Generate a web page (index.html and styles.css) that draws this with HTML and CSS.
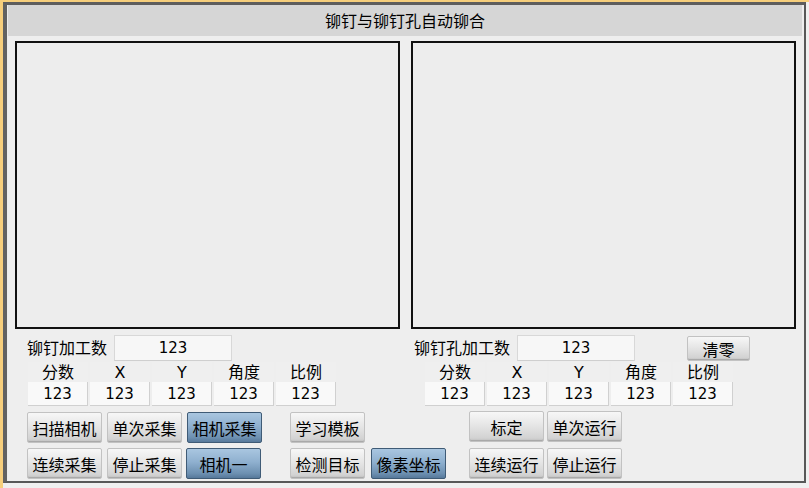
FILE: index.html
```html
<!DOCTYPE html>
<html>
<head>
    <meta charset="utf-8">
    <title>铆钉与铆钉孔自动铆合</title>
    <link rel="stylesheet" href="styles.css">
</head>
<body>
    <div class="frame">
        <div class="panel">
            <div class="title-bar">铆钉与铆钉孔自动铆合</div>

            <div class="views">
                <div class="view"></div>
                <div class="view"></div>
            </div>

            <div class="info">
                <div class="half left">
                    <div class="count-row">
                        <span class="count-label">铆钉加工数</span>
                        <div class="field num">123</div>
                    </div>
                    <div class="result-grid">
                        <div class="head">分数</div>
                        <div class="head">X</div>
                        <div class="head">Y</div>
                        <div class="head">角度</div>
                        <div class="head">比例</div>
                        <div class="val num">123</div>
                        <div class="val num">123</div>
                        <div class="val num">123</div>
                        <div class="val num">123</div>
                        <div class="val num">123</div>
                    </div>
                </div>
                <div class="half right">
                    <div class="count-row">
                        <span class="count-label wide">铆钉孔加工数</span>
                        <div class="field num">123</div>
                        <button class="btn clear">清零</button>
                    </div>
                    <div class="result-grid">
                        <div class="head">分数</div>
                        <div class="head">X</div>
                        <div class="head">Y</div>
                        <div class="head">角度</div>
                        <div class="head">比例</div>
                        <div class="val num">123</div>
                        <div class="val num">123</div>
                        <div class="val num">123</div>
                        <div class="val num">123</div>
                        <div class="val num">123</div>
                    </div>
                </div>
            </div>

            <div class="controls">
                <div class="btn-grid three">
                    <button class="btn">扫描相机</button>
                    <button class="btn">单次采集</button>
                    <button class="btn blue">相机采集</button>
                    <button class="btn">连续采集</button>
                    <button class="btn">停止采集</button>
                    <button class="btn blue shift">相机一</button>
                </div>
                <div class="btn-grid detect">
                    <button class="btn">学习模板</button>
                    <span></span>
                    <button class="btn">检测目标</button>
                    <button class="btn blue">像素坐标</button>
                </div>
                <div class="btn-grid run">
                    <button class="btn up">标定</button>
                    <button class="btn up">单次运行</button>
                    <button class="btn">连续运行</button>
                    <button class="btn">停止运行</button>
                </div>
            </div>
        </div>
    </div>
</body>
</html>
```

FILE: styles.css
```css
body {
    margin: 0;
    background: #f0f0f0;
    font-family: "Noto Sans CJK SC", sans-serif;
    font-size: 16px;
    color: #000;
    overflow: hidden;
}

.frame {
    width: 809px;
    height: 488px;
    box-sizing: border-box;
    border-top: 2px solid #f7cf7c;
    border-left: 3px solid #f7cf7c;
}

.panel {
    width: 803px;
    height: 481px;
    box-sizing: border-box;
    background: #eeeeee;
    border-top: 3px solid #5e5e5e;
    border-left: 4px solid #626262;
    border-right: 2px solid #585858;
    border-bottom: 2px solid #585858;
    box-shadow: inset 1px 0 0 #ececec;
}

.title-bar {
    height: 31px;
    margin: 0 2px 0 1px;
    background: #d6d6d6;
    text-align: center;
    line-height: 31px;
    font-size: 16px;
}

.views {
    display: flex;
    gap: 11px;
    padding-left: 8px;
    margin-top: 5px;
}

.view {
    width: 385px;
    height: 288px;
    box-sizing: border-box;
    border: 2px solid #111;
    background: #ededed;
}

.info {
    display: flex;
}

.half.left {
    width: 404px;
    padding-left: 20px;
    box-sizing: border-box;
}

.half.right {
    padding-left: 3px;
}

.count-row {
    display: flex;
    align-items: center;
    height: 25px;
    margin-top: 6px;
}

.count-label {
    width: 87px;
    line-height: 25px;
}

.count-label.wide {
    width: 103px;
}

.field {
    width: 118px;
    height: 26px;
    box-sizing: border-box;
    background: #f7f7f7;
    border: 1px solid #d8d8d8;
    border-bottom-color: #cfcfcf;
    text-align: center;
    line-height: 25px;
}

.num {
    font-family: "DejaVu Sans", sans-serif;
    font-size: 15px;
}

.result-grid {
    display: grid;
    grid-template-columns: repeat(5, 60px);
    grid-template-rows: 20px 24px;
    column-gap: 2px;
    margin-top: 2px;
    padding-left: 1px;
}

.half.right .result-grid {
    padding-left: 11px;
}

.head {
    text-align: center;
    line-height: 22px;
    background: #efefef;
    font-family: "DejaVu Sans", "Noto Sans CJK SC", sans-serif;
}

.val {
    text-align: center;
    line-height: 25px;
    background: #f9f9f9;
    border-right: 1px solid #d0d0d0;
    border-bottom: 1px solid #d0d0d0;
}

.controls {
    display: flex;
    padding-left: 20px;
    margin-top: 6px;
}

.btn-grid {
    display: grid;
    grid-template-rows: 31px 31px;
    row-gap: 5px;
}

.btn-grid.three {
    grid-template-columns: repeat(3, 75px);
    column-gap: 5px;
}

.btn-grid.detect {
    grid-template-columns: repeat(2, 75px);
    column-gap: 6px;
    margin-left: 28px;
}

.btn-grid.run {
    grid-template-columns: repeat(2, 75px);
    column-gap: 3px;
    margin-left: 23px;
}

.btn {
    margin: 0;
    padding: 0;
    font-family: "Noto Sans CJK SC", sans-serif;
    font-size: 16px;
    color: #000;
    background: linear-gradient(#f7f7f7, #e6e6e6 45%, #d2d2d2 90%, #bdbdbd);
    border: 1px solid #c2c2c2;
    border-radius: 2px;
    box-shadow: inset 0 -1px 0 #a9a9a9;
    cursor: pointer;
}

.btn.blue {
    background: linear-gradient(#a9c6e0, #8fb0cf 45%, #6c8fb0 85%, #56789a);
    border-color: #3f5b76;
    box-shadow: none;
}

.btn.shift {
    position: relative;
    left: -1px;
}

.btn.up {
    position: relative;
    top: -1px;
}

.btn.clear {
    width: 63px;
    height: 25px;
    margin-left: 52px;
    position: relative;
    top: 1px;
}
```
